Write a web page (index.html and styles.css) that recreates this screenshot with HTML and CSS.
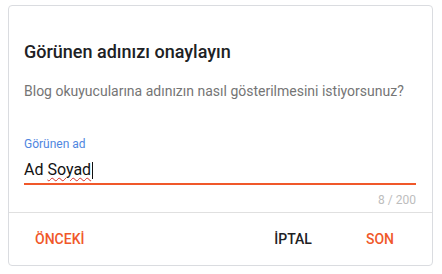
FILE: index.html
```html
<!DOCTYPE html>
<html lang="tr">
<head>
<meta charset="utf-8">
<title>Görünen adınızı onaylayın</title>
<link rel="stylesheet" href="styles.css">
</head>
<body>
<div class="card">
  <div class="content">
    <h1 class="title">Görünen adınızı onaylayın</h1>
    <p class="desc">Blog okuyucularına adınızın nasıl gösterilmesini istiyorsunuz?</p>
    <div class="field">
      <div class="label">Görünen ad</div>
      <div class="input">Ad <span class="spell">Soyad</span><span class="caret"></span></div>
      <div class="counter">8 / 200</div>
    </div>
  </div>
  <div class="actions">
    <button class="btn accent">ÖNCEKİ</button>
    <span class="spacer"></span>
    <button class="btn plain">İPTAL</button>
    <button class="btn accent last">SON</button>
  </div>
</div>
</body>
</html>
```

FILE: styles.css
```css
html, body {
  margin: 0;
  background: #ffffff;
}
body {
  font-family: Roboto, "Liberation Sans", Arial, sans-serif;
  padding: 5px 9px 0 8px;
}
.card {
  border: 1px solid #dadce0;
  border-radius: 4px;
  display: flex;
  flex-direction: column;
  box-sizing: border-box;
  height: 261px;
}
.content {
  padding: 34px 16px 0 15px;
  flex: 1;
}
.title {
  margin: 0;
  font-size: 18px;
  line-height: 24px;
  font-weight: 500;
  color: #202124;
}
.desc {
  margin: 17px 0 0;
  font-size: 14px;
  line-height: 20px;
  color: #757575;
}
.field {
  margin-top: 35px;
}
.label {
  font-size: 12px;
  line-height: 16px;
  color: #4f86e0;
}
.input {
  margin-top: 8px;
  font-size: 16px;
  line-height: 20px;
  color: #111111;
  padding-bottom: 3px;
  border-bottom: 2px solid #f0582a;
  display: flex;
  align-items: center;
  white-space: pre;
}
.spell {
  text-decoration: underline wavy #d93025;
  text-decoration-thickness: 1px;
  text-underline-offset: 2px;
}
.caret {
  width: 1px;
  height: 17px;
  background: #111111;
  margin-left: 1px;
}
.counter {
  margin-top: 7px;
  text-align: right;
  font-size: 12px;
  line-height: 16px;
  color: #bdbdbd;
}
.actions {
  border-top: 1px solid #e0e0e0;
  height: 52px;
  display: flex;
  align-items: center;
  padding: 0 38px 0 26px;
}
.spacer {
  flex: 1;
}
.btn {
  font-family: inherit;
  font-size: 14px;
  font-weight: 500;
  background: none;
  border: none;
  padding: 0;
  margin: 0;
  line-height: 20px;
}
.accent {
  color: #f0582a;
}
.plain {
  color: #202124;
}
.last {
  margin-left: 54px;
}
```
